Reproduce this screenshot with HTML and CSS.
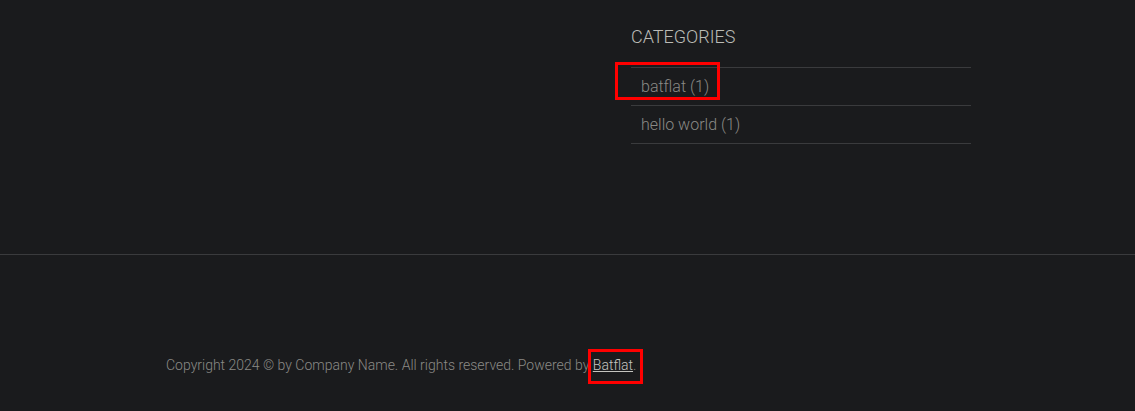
FILE: index.html
```html
<!DOCTYPE html>
<html>
<head>
<meta charset="utf-8">
<link rel="stylesheet" href="styles.css">
</head>
<body>
<div class="page">
  <div class="container content">
    <main class="main"></main>
    <aside class="sidebar">
      <h3 class="widget-title">CATEGORIES</h3>
      <ul class="cat-list">
        <li class="cat-item"><a class="cat-link" href="#">batflat (1)<span class="mark mark-cat"></span></a></li>
        <li class="cat-item"><a class="cat-link" href="#">hello world (1)</a></li>
      </ul>
    </aside>
  </div>
  <footer class="footer">
    <div class="container">
      <p class="copy">Copyright 2024 © by Company Name. All rights reserved. Powered by <a class="foot-link" href="#">Batflat<span class="mark mark-foot"></span></a>.</p>
    </div>
  </footer>
</div>
</body>
</html>
```
FILE: styles.css
```css
html, body {
  margin: 0;
  padding: 0;
  background: #1a1b1d;
}
body {
  font-family: Roboto, "Liberation Sans", sans-serif;
  font-weight: 300;
  color: #8a8a86;
}
.container {
  width: 805px;
  margin: 0 auto;
}
.content {
  display: flex;
  height: 254px;
}
.main {
  flex: 1;
}
.sidebar {
  width: 340px;
  margin-right: -1px;
}
.widget-title {
  margin: 27px 0 20px;
  font-size: 18px;
  line-height: 20px;
  font-weight: 300;
  color: #bbbbb6;
}
.cat-list {
  list-style: none;
  margin: 0;
  padding: 0;
  border-bottom: 1px solid #3a3b3d;
}
.cat-item {
  border-top: 1px solid #3a3b3d;
  padding: 7px 10px 6px;
  font-size: 16px;
  line-height: 24px;
}
.cat-link {
  position: relative;
  display: inline-block;
  color: #8a8a86;
  text-decoration: none;
}
.footer {
  border-top: 1px solid #3a3b3d;
  height: 156px;
  padding-top: 100px;
  box-sizing: border-box;
}
.copy {
  margin: 0;
  padding-left: 1px;
  font-size: 14px;
  line-height: 20px;
  color: #8a8a86;
}
.foot-link {
  position: relative;
  color: #c4c4c0;
  text-decoration: underline;
}
.mark {
  position: absolute;
  border: 3px solid #ff0000;
  box-sizing: border-box;
  pointer-events: none;
}
.mark-cat {
  left: -26px;
  top: -13px;
  width: 105px;
  height: 38px;
}
.mark-foot {
  left: -5px;
  top: -8px;
  width: 55px;
  height: 35px;
}
```
